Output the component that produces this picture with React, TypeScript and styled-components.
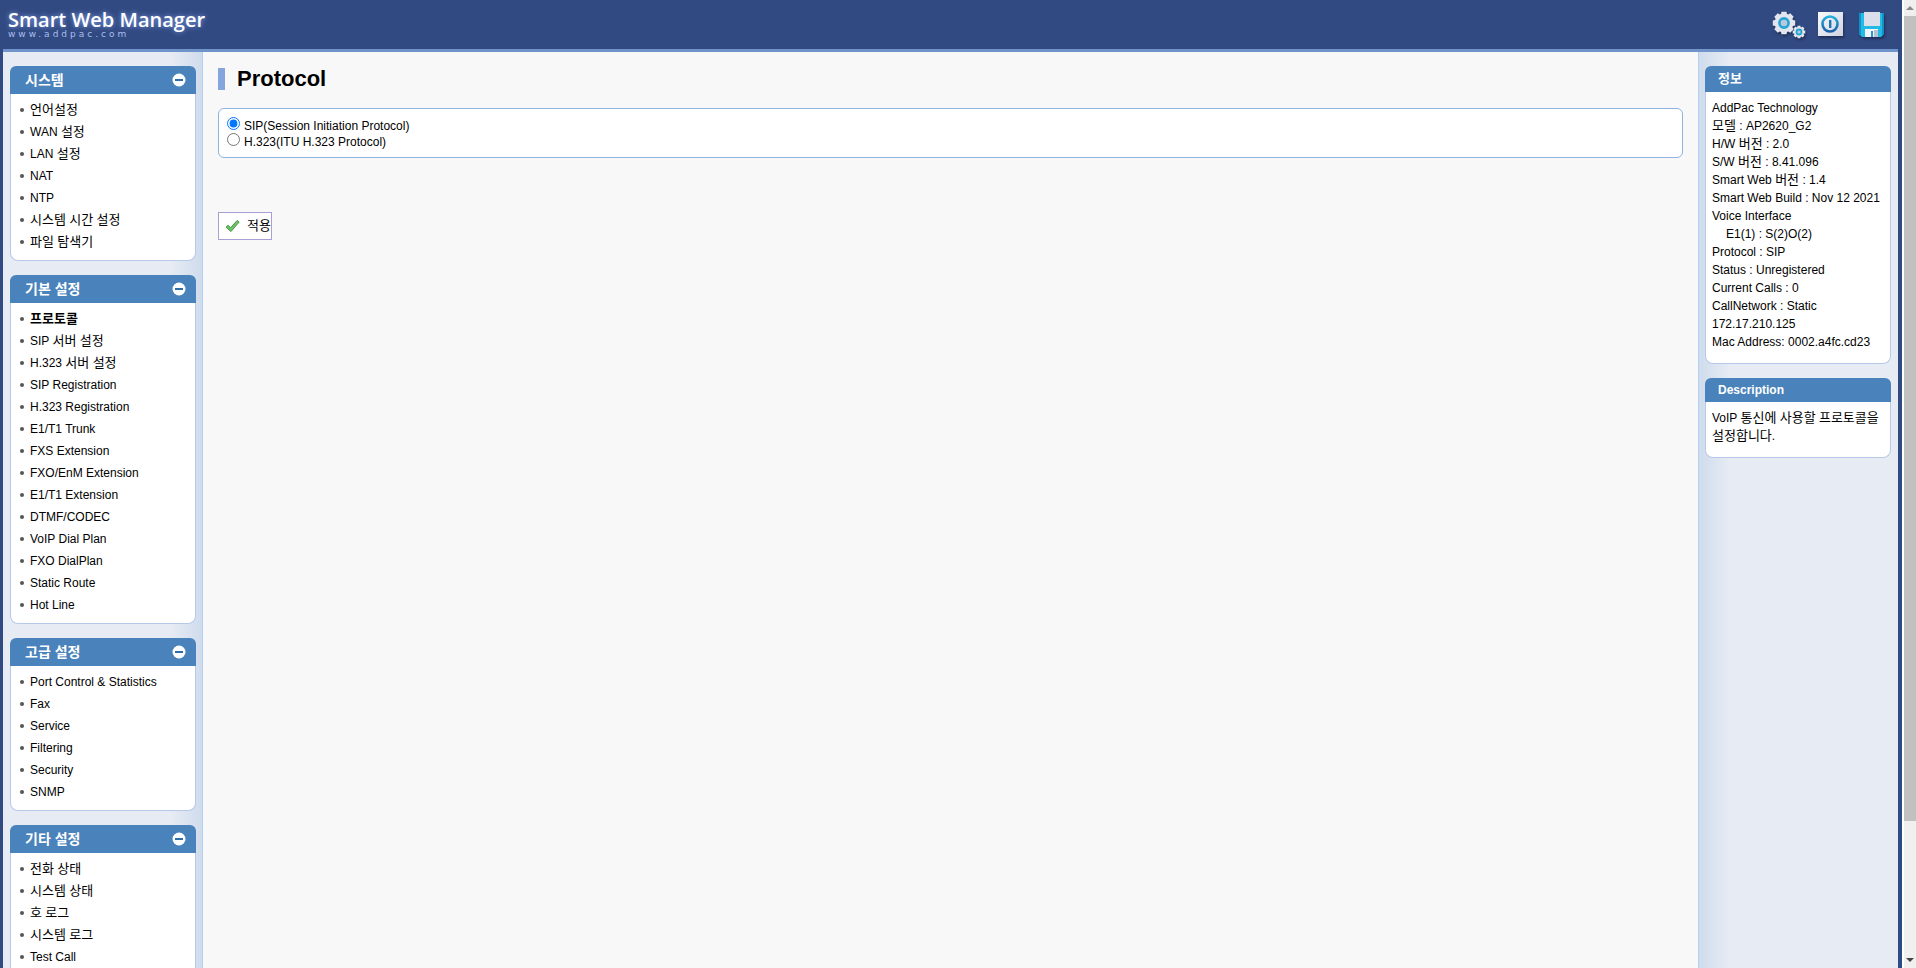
import React, { useState } from "react";
import styled, { createGlobalStyle } from "styled-components";

const NAVY = "#324a82";
const BLUE = "#4a83bb";

const GlobalStyle = createGlobalStyle`
  * { box-sizing: border-box; }
  body {
    margin: 0;
    background: #fff;
    color: #000;
    font: 12px/16px "Liberation Sans", "Noto Sans CJK KR", Arial, sans-serif;
  }
  button { font: inherit; color: inherit; cursor: pointer; }
  a { color: inherit; text-decoration: none; }
`;

const Screen = styled.div`
  display: flex;
  height: 100vh;
  overflow: hidden;
`;

const Page = styled.div`
  display: flex;
  flex-direction: column;
  flex: 1;
  min-width: 0;
  border-left: 3px solid ${NAVY};
  border-right: 4px solid #2f4b82;
`;

const Header = styled.header`
  display: flex;
  justify-content: space-between;
  flex: none;
  height: 52px;
  padding: 7px 8px 0 5px;
  background: ${NAVY};
  border-bottom: 3px solid #7193cb;
`;

const Brand = styled.div`
  color: #fff;
`;

const BrandName = styled.div`
  font: 600 20px/26px "Open Sans", "Noto Sans", sans-serif;
  text-shadow: 0 0 5px #86a3ee;
`;

const BrandSite = styled.div`
  margin-top: -4px;
  color: #a9bff0;
  font: 9px/10px "DejaVu Sans", sans-serif;
  letter-spacing: 3px;
`;

const Tools = styled.div`
  display: flex;
  gap: 8px;
`;

const ToolButton = styled.button`
  width: 34px;
  height: 34px;
  padding: 0;
  border: 0;
  background: none;

  svg { display: block; filter: drop-shadow(1px 2px 1px #1f2f5a); }
`;

const Columns = styled.div`
  display: flex;
  flex: 1;
  min-height: 0;
`;

const Side = styled.div<{ $right?: boolean }>`
  display: flex;
  flex-direction: column;
  gap: 14px;
  flex: 0 0 200px;
  padding: ${(p) => (p.$right ? "14px 7px 0 6px" : "14px 6px 0 7px")};
  overflow: hidden;
  background: linear-gradient(
      ${(p) => (p.$right ? "to left" : "to right")},
      #e7ecf4 84%,
      #cfdced
    );
  ${(p) => (p.$right ? "border-left" : "border-right")}: 1px solid #b4cff2;
`;

const Panel = styled.section`
  flex: none;
`;

const PanelHead = styled.div<{ $height: number; $inset: number }>`
  display: flex;
  align-items: center;
  justify-content: space-between;
  height: ${(p) => p.$height}px;
  padding: 0 10px 0 ${(p) => p.$inset}px;
  border-radius: 6px 6px 0 0;
  background: ${BLUE};
  color: #fff;
`;

const PanelTitle = styled.h2<{ $size: number }>`
  margin: 0;
  font-size: ${(p) => p.$size}px;
  line-height: 20px;
`;

const Toggle = styled.button`
  width: 14px;
  height: 14px;
  padding: 0;
  border: 0;
  background: none;

  svg { display: block; }
`;

const panelBody = `
  margin: 0;
  border: 1px solid #b7c8e8;
  border-top: 0;
  border-radius: 0 0 8px 8px;
  background: #fff;
`;

const Menu = styled.ul`
  ${panelBody}
  padding: 5px 0 7px 9px;
  list-style: none;
`;

const MenuItem = styled.li<{ $current?: boolean }>`
  display: flex;
  align-items: center;
  gap: 6px;
  height: 22px;
  line-height: 22px;
  font-weight: ${(p) => (p.$current ? "bold" : "normal")};

  &::before {
    content: "";
    width: 4px;
    height: 4px;
    border-radius: 2px;
    background: #555;
  }
`;

const Hangul = styled.span`
  font-size: 13px;
`;

const Info = styled.div`
  ${panelBody}
  padding: 7px 6px 12px;
  line-height: 18px;
  word-break: keep-all;
`;

const InfoLine = styled.div<{ $indent?: boolean }>`
  padding-left: ${(p) => (p.$indent ? 14 : 0)}px;
`;

const Main = styled.main`
  flex: 1;
  min-width: 0;
  padding: 16px 15px;
  background: #f8f8f8;
`;

const Title = styled.h1`
  margin: 0 0 18px;
  padding-left: 12px;
  border-left: 7px solid #86a5dc;
  font-size: 22px;
  line-height: 22px;
`;

const Options = styled.fieldset`
  margin: 0 0 54px;
  padding: 8px;
  border: 1px solid #8fb2df;
  border-radius: 6px;
  background: #fff;
`;

const Option = styled.label`
  display: flex;
  align-items: flex-start;
  gap: 4px;
  height: 16px;
  line-height: 18px;

  input { width: 13px; height: 13px; margin: 0; }
`;

const Apply = styled.button`
  display: flex;
  align-items: center;
  gap: 7px;
  height: 28px;
  padding: 0 0 0 6px;
  border: 1px solid #a7a0d4;
  background: #fff;
`;

const ScrollBar = styled.div`
  display: flex;
  flex-direction: column;
  flex: 0 0 14px;
  border-left: 2px solid #fff;
  background: #f0f0f0;
`;

const Arrow = styled.div<{ $down?: boolean }>`
  display: flex;
  align-items: center;
  justify-content: center;
  height: 16px;

  &::before {
    content: "";
    border: 4px solid transparent;
    ${(p) =>
      p.$down
        ? "border-top-color: #444; border-bottom-width: 0;"
        : "border-bottom-color: #8a8a8a; border-top-width: 0;"}
  }
`;

const Track = styled.div`
  flex: 1;
`;

const Thumb = styled.div`
  height: 86%;
  background: #c1c1c1;
`;

// Hangul is set one size larger than the Latin text beside it.
const Label = ({ text }: { text: string }) => (
  <span>
    {text.split(/([\uac00-\ud7a3]+)/).map((part, i) =>
      i % 2 ? <Hangul key={i}>{part}</Hangul> : part
    )}
  </span>
);

const gearPath = (cx: number, cy: number, outer: number, inner: number) => {
  const points: string[] = [];
  for (let i = 0; i < 8; i++) {
    [
      [-0.32, inner],
      [-0.22, outer],
      [0.22, outer],
      [0.32, inner],
    ].forEach(([offset, r]) => {
      const a = (i * Math.PI) / 4 + offset;
      points.push(`${(cx + r * Math.cos(a)).toFixed(1)} ${(cy + r * Math.sin(a)).toFixed(1)}`);
    });
  }
  return `M${points.join("L")}Z`;
};

const Gears = () => (
  <svg width="34" height="34" viewBox="0 0 34 34">
    <path d={gearPath(12, 16, 11.5, 9.4)} fill="#e3e6ee" />
    <circle cx="12" cy="16" r="4.6" fill="#b9c8de" stroke="#25a5d3" strokeWidth="2.6" />
    <path d={gearPath(27, 25, 6.5, 5.2)} fill="#e3e6ee" />
    <circle cx="27" cy="25" r="2.5" fill="#b9c8de" stroke="#25a5d3" strokeWidth="1.8" />
  </svg>
);

const Power = () => (
  <svg width="34" height="34" viewBox="0 0 34 34">
    <defs>
      <linearGradient id="plate" x2="1" y2="1">
        <stop offset="0" stopColor="#fafafd" />
        <stop offset="1" stopColor="#cfd3df" />
      </linearGradient>
      <linearGradient id="ring" x2="0" y2="1">
        <stop offset="0" stopColor="#22b0dc" />
        <stop offset="1" stopColor="#1b5fa8" />
      </linearGradient>
    </defs>
    <path d="M4 5h25v24H4z" fill="url(#plate)" />
    <circle cx="16" cy="17" r="7.5" fill="none" stroke="url(#ring)" strokeWidth="2.6" />
    <path d="M15 13h2.4v8H15z" fill="#1c78b8" />
  </svg>
);

const Disk = () => (
  <svg width="34" height="34" viewBox="0 0 34 34">
    <path d="M3 6h25v21l-3 3H6l-3-3z" fill="#21bce6" />
    <path d="M3 6h2v22l-2-1zM26 6h2v21l-2 2z" fill="#1690c4" />
    <path d="M8 5h16v14H8z" fill="#dcdfe9" />
    <path d="M9 22h13v8H9z" fill="#f3f5fa" />
    <path d="M15 24h2v6h-2z" fill="#1c9ad0" />
    <path d="M18 23h4v7h-4z" fill="#b9bfce" />
  </svg>
);

const Check = () => (
  <svg width="15" height="14" viewBox="0 0 15 14">
    <path d="M1 8.2l2-2 2.6 2.5L12.2 1.4l1.9 1.7L5.9 12.6z" fill="#6cc265" stroke="#479a48" strokeLinejoin="round" />
  </svg>
);

const MENUS = [
  { title: "시스템", items: ["언어설정", "WAN 설정", "LAN 설정", "NAT", "NTP", "시스템 시간 설정", "파일 탐색기"] },
  {
    title: "기본 설정",
    items: [
      "프로토콜", "SIP 서버 설정", "H.323 서버 설정", "SIP Registration", "H.323 Registration",
      "E1/T1 Trunk", "FXS Extension", "FXO/EnM Extension", "E1/T1 Extension", "DTMF/CODEC",
      "VoIP Dial Plan", "FXO DialPlan", "Static Route", "Hot Line",
    ],
  },
  { title: "고급 설정", items: ["Port Control & Statistics", "Fax", "Service", "Filtering", "Security", "SNMP"] },
  { title: "기타 설정", items: ["전화 상태", "시스템 상태", "호 로그", "시스템 로그", "Test Call"] },
];

const INFO = [
  "AddPac Technology", "모델 : AP2620_G2", "H/W 버전 : 2.0", "S/W 버전 : 8.41.096", "Smart Web 버전 : 1.4",
  "Smart Web Build : Nov 12 2021", "Voice Interface", "E1(1) : S(2)O(2)", "Protocol : SIP",
  "Status : Unregistered", "Current Calls : 0", "CallNetwork : Static 172.17.210.125",
  "Mac Address: 0002.a4fc.cd23",
];

const MenuPanel = ({ title, items }: { title: string; items: string[] }) => {
  const [open, setOpen] = useState(true);
  return (
    <Panel>
      <PanelHead $height={28} $inset={15}>
        <PanelTitle $size={14}>{title}</PanelTitle>
        <Toggle type="button" aria-label={title} aria-expanded={open} onClick={() => setOpen(!open)}>
          <svg width="14" height="14" viewBox="0 0 14 14">
            <circle cx="7" cy="7" r="6.5" fill="#fff" />
            <path d="M3 6h8v2H3z" fill="#2f6da8" />
          </svg>
        </Toggle>
      </PanelHead>
      {open && (
        <Menu>
          {items.map((item) => (
            <MenuItem key={item} $current={item === "프로토콜"}>
              <a href="#"><Label text={item} /></a>
            </MenuItem>
          ))}
        </Menu>
      )}
    </Panel>
  );
};

export default function App() {
  const [protocol, setProtocol] = useState("sip");
  return (
    <Screen>
      <GlobalStyle />
      <Page>
        <Header>
          <Brand>
            <BrandName>Smart Web Manager</BrandName>
            <BrandSite>www.addpac.com</BrandSite>
          </Brand>
          <Tools>
            <ToolButton type="button" aria-label="Settings"><Gears /></ToolButton>
            <ToolButton type="button" aria-label="Restart"><Power /></ToolButton>
            <ToolButton type="button" aria-label="Save"><Disk /></ToolButton>
          </Tools>
        </Header>
        <Columns>
          <Side as="nav">
            {MENUS.map((menu) => (
              <MenuPanel key={menu.title} {...menu} />
            ))}
          </Side>
          <Main>
            <Title>Protocol</Title>
            <Options>
              <Option>
                <input type="radio" name="protocol" checked={protocol === "sip"} onChange={() => setProtocol("sip")} />
                SIP(Session Initiation Protocol)
              </Option>
              <Option>
                <input type="radio" name="protocol" checked={protocol === "h323"} onChange={() => setProtocol("h323")} />
                H.323(ITU H.323 Protocol)
              </Option>
            </Options>
            <Apply type="button">
              <Check />
              <Label text="적용" />
            </Apply>
          </Main>
          <Side as="aside" $right>
            <Panel>
              <PanelHead $height={26} $inset={13}>
                <PanelTitle $size={13}>정보</PanelTitle>
              </PanelHead>
              <Info>
                {INFO.map((line) => (
                  <InfoLine key={line} $indent={line.startsWith("E1")}><Label text={line} /></InfoLine>
                ))}
              </Info>
            </Panel>
            <Panel>
              <PanelHead $height={24} $inset={13}>
                <PanelTitle $size={12}>Description</PanelTitle>
              </PanelHead>
              <Info>
                <Label text="VoIP 통신에 사용할 프로토콜을 설정합니다." />
              </Info>
            </Panel>
          </Side>
        </Columns>
      </Page>
      <ScrollBar aria-hidden="true">
        <Arrow />
        <Track><Thumb /></Track>
        <Arrow $down />
      </ScrollBar>
    </Screen>
  );
}
